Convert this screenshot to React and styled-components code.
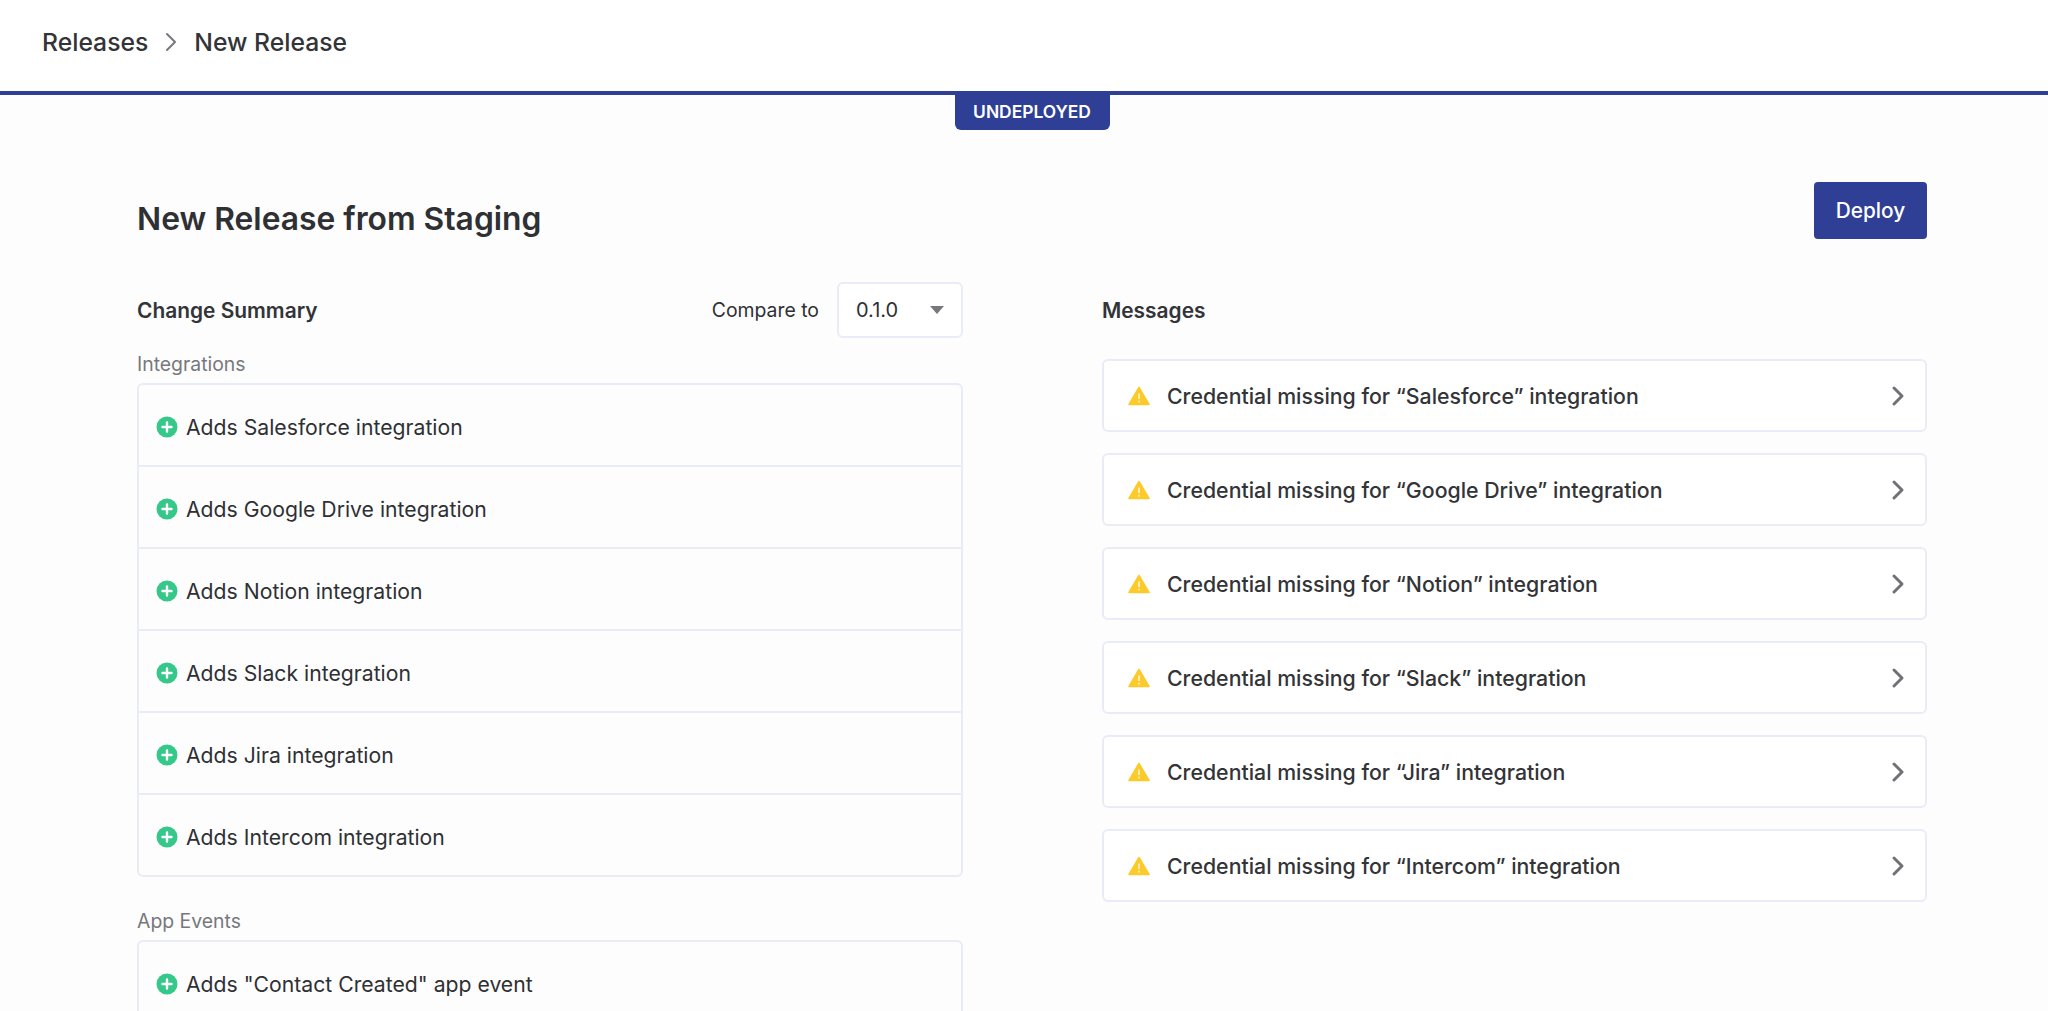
import { createGlobalStyle } from 'styled-components';
import styled from 'styled-components';

const GlobalStyle = createGlobalStyle`
  html, body {
    margin: 0;
    height: 100%;
    overflow: hidden;
    background: #fdfdfe;
    color: #2f3033;
    font-family: Inter, "Liberation Sans", sans-serif;
  }
  * { box-sizing: border-box; }
`;

const Header = styled.header`
  display: flex;
  align-items: center;
  gap: 11px;
  height: 95px;
  padding: 0 42px 8px;
  background: #fff;
  border-bottom: 4px solid #2f3f96;
  font-size: 24.7px;
  font-weight: 500;
`;

const Crumb = styled.span`
  color: #333437;
`;

const BadgeRow = styled.div`
  display: flex;
  justify-content: center;
  padding-left: 16px;
`;

const Badge = styled.div`
  display: flex;
  align-items: center;
  justify-content: center;
  width: 155px;
  height: 35px;
  padding-bottom: 3px;
  background: #2f3f96;
  border-radius: 0 0 6px 6px;
  color: #fff;
  font-size: 17.4px;
  font-weight: 600;
`;

const Main = styled.main`
  padding: 52px 121px 0 137px;
`;

const TitleRow = styled.div`
  display: flex;
  align-items: center;
  justify-content: space-between;
  height: 56px;
`;

const Title = styled.h1`
  margin: 0;
  padding-top: 16px;
  font-size: 31.8px;
  font-weight: 600;
  color: #2f3033;
`;

const DeployButton = styled.button`
  width: 113px;
  height: 57px;
  border: 0;
  border-radius: 4px;
  background: #2f3f96;
  color: #fff;
  font: 500 20.8px Inter, sans-serif;
`;

const Columns = styled.div`
  display: grid;
  grid-template-columns: 826px 825px;
  gap: 139px;
  margin-top: 44px;
`;

const SectionHead = styled.div`
  display: flex;
  align-items: center;
  justify-content: space-between;
  height: 56px;
`;

const SectionTitle = styled.h2`
  margin: 0;
  font-size: 20.9px;
  font-weight: 600;
  color: #333437;
`;

const CompareGroup = styled.div`
  display: flex;
  align-items: center;
  gap: 18px;
  font-size: 19.4px;
`;

const Select = styled.div`
  display: flex;
  align-items: center;
  justify-content: space-between;
  width: 126px;
  height: 56px;
  padding: 0 17px 0 17px;
  background: #fff;
  border: 2px solid #e9ebf6;
  border-radius: 6px;
  font-size: 20px;
`;

const Caret = styled.span`
  width: 0;
  height: 0;
  border-left: 7px solid transparent;
  border-right: 7px solid transparent;
  border-top: 8px solid #77787c;
`;

const GroupLabel = styled.div`
  margin-top: 16px;
  height: 29px;
  line-height: 21px;
  font-size: 19.4px;
  color: #77787c;
`;

const Card = styled.div`
  background: #fdfdfe;
  border: 2px solid #e9ebf6;
  border-radius: 6px;
  margin-bottom: 34px;
`;

const ChangeRow = styled.div`
  display: flex;
  align-items: center;
  gap: 8px;
  height: ${(p) => (p.$first ? '80px' : '82px')};
  padding: 4px 0 0 17px;
  font-size: 21.2px;
  border-top: ${(p) => (p.$first ? '0' : '2px solid #e9ebf6')};
`;

const MessageList = styled.div`
  display: flex;
  flex-direction: column;
  gap: 21px;
  margin-top: 21px;
`;

const Message = styled.div`
  display: flex;
  align-items: center;
  height: 73px;
  padding: 0 15px 0 24px;
  background: #fff;
  border: 2px solid #e9ebf6;
  border-radius: 6px;
  font-size: 21.3px;
  font-weight: 500;
  color: #333437;
`;

const MessageText = styled.span`
  flex: 1;
  margin-left: 17px;
`;

function ChevronIcon({ color = '#707175', width = 3 }) {
  return (
    <svg width="24" height="24" viewBox="0 0 24 24" fill="none" aria-hidden="true">
      <path d="M8 4l8 8-8 8" stroke={color} strokeWidth={width} strokeLinecap="round" strokeLinejoin="round" />
    </svg>
  );
}

function AddIcon() {
  return (
    <svg width="22" height="22" viewBox="0 0 22 22" aria-hidden="true">
      <circle cx="11" cy="11" r="10.5" fill="#35c88a" />
      <path d="M11 6.5v9M6.5 11h9" stroke="#fff" strokeWidth="2.4" strokeLinecap="round" />
    </svg>
  );
}

function WarningIcon() {
  return (
    <svg width="22" height="20" viewBox="0 0 22 20" aria-hidden="true">
      <path d="M11 1.5 21 18.5H1Z" fill="#fccb2b" stroke="#fccb2b" strokeWidth="1.6" strokeLinejoin="round" />
      <path d="M11 7.5v5.5" stroke="#fff3c4" strokeWidth="1.8" />
      <path d="M11 14.8v1.6" stroke="#fff3c4" strokeWidth="1.6" />
    </svg>
  );
}

const integrations = ['Salesforce', 'Google Drive', 'Notion', 'Slack', 'Jira', 'Intercom'];

export default function App() {
  return (
    <>
      <GlobalStyle />
      <Header>
        <Crumb>Releases</Crumb>
        <ChevronIcon color="#77787c" width={2} />
        <Crumb>New Release</Crumb>
      </Header>
      <BadgeRow>
        <Badge>UNDEPLOYED</Badge>
      </BadgeRow>
      <Main>
        <TitleRow>
          <Title>New Release from Staging</Title>
          <DeployButton>Deploy</DeployButton>
        </TitleRow>
        <Columns>
          <section>
            <SectionHead>
              <SectionTitle>Change Summary</SectionTitle>
              <CompareGroup>
                Compare to
                <Select>
                  0.1.0
                  <Caret />
                </Select>
              </CompareGroup>
            </SectionHead>
            <GroupLabel>Integrations</GroupLabel>
            <Card>
              {integrations.map((name, i) => (
                <ChangeRow key={name} $first={i === 0}>
                  <AddIcon />
                  Adds {name} integration
                </ChangeRow>
              ))}
            </Card>
            <GroupLabel>App Events</GroupLabel>
            <Card>
              <ChangeRow $first>
                <AddIcon />
                Adds "Contact Created" app event
              </ChangeRow>
            </Card>
          </section>
          <section>
            <SectionHead>
              <SectionTitle>Messages</SectionTitle>
            </SectionHead>
            <MessageList>
              {integrations.map((name) => (
                <Message key={name}>
                  <WarningIcon />
                  <MessageText>Credential missing for “{name}” integration</MessageText>
                  <ChevronIcon />
                </Message>
              ))}
            </MessageList>
          </section>
        </Columns>
      </Main>
    </>
  );
}
